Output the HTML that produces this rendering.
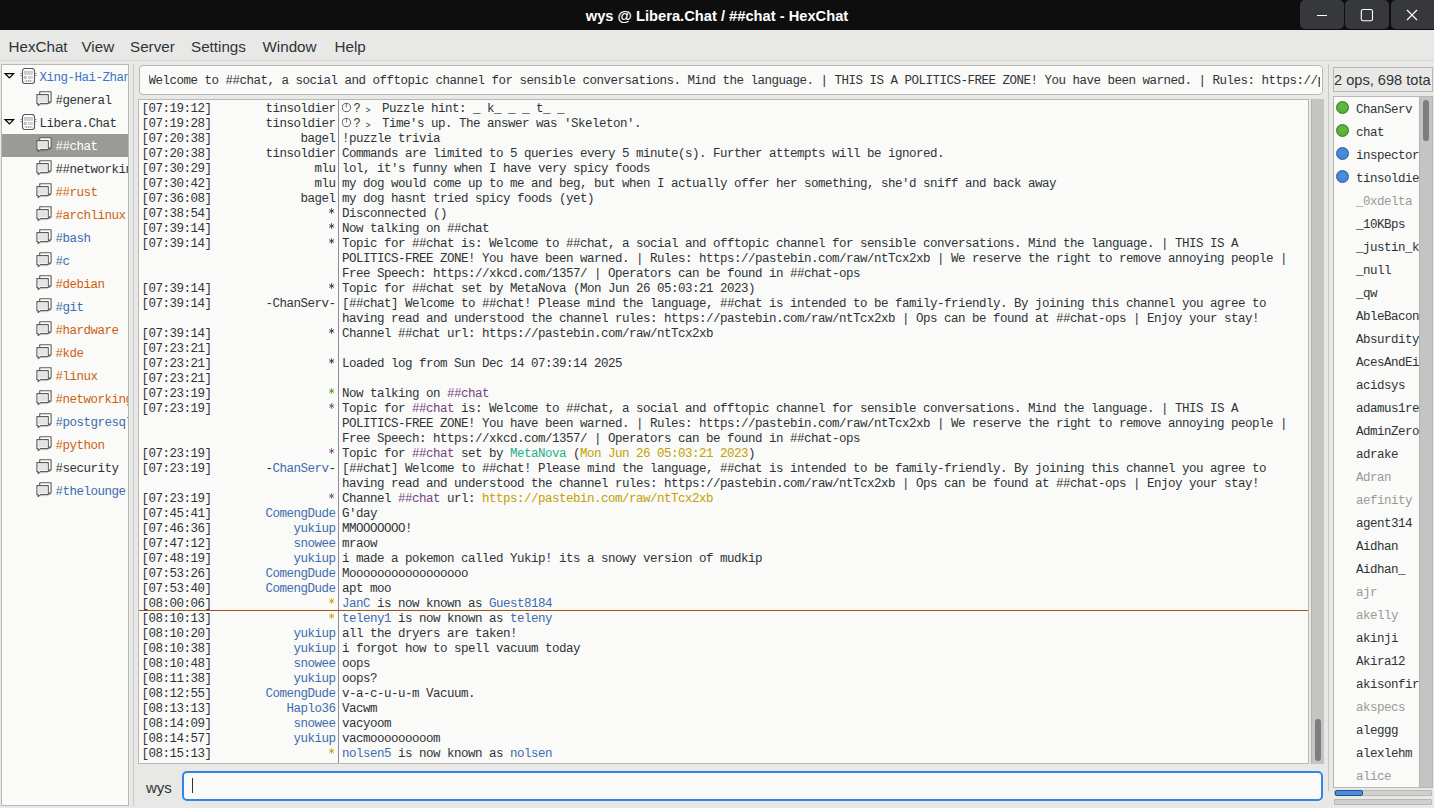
<!DOCTYPE html><html><head><meta charset="utf-8"><style>
*{margin:0;padding:0;box-sizing:border-box}
html,body{width:1434px;height:808px;overflow:hidden;background:#e8e8e7;position:relative;font-family:"Liberation Sans", sans-serif}
.abs{position:absolute}
#title{position:absolute;left:0;top:0;width:1434px;height:30px;background:#0e0e0e}
#ttext{position:absolute;left:0;top:1px;width:1434px;text-align:center;color:#fff;font:bold 14.7px "Liberation Sans", sans-serif;line-height:30px;white-space:pre}
.wb{position:absolute;top:0;width:44px;height:29px;background:#37383b;border-radius:5px}
#menu{position:absolute;left:0;top:30px;width:1434px;height:31px;background:#e8e8e7;border-bottom:1px solid #d6d5d2}
.mi{position:absolute;top:8px;font:15.2px "Liberation Sans", sans-serif;color:#2e3436;white-space:pre}
#tree{position:absolute;left:1px;top:64px;width:128px;height:742px;background:#fafaf9;border:1px solid #bab8b4;overflow:hidden}
.trow{position:absolute;left:0;width:126px;height:23px}
.trow.sel{background:#9b9a95}
.tl{position:absolute;top:6px;font-family:"Liberation Mono", monospace;font-size:12.5px;letter-spacing:-0.5012px;white-space:pre;line-height:15px}
.vsep{position:absolute;width:1px;background:#c9c7c3}
#topic{position:absolute;left:139px;top:65px;width:1184px;height:30px;background:#fafaf9;border:1px solid #bab8b4;border-radius:4px;overflow:hidden}
#topic span{position:absolute;left:8.5px;top:8px;width:1171px;overflow:hidden;font-family:"Liberation Mono", monospace;font-size:12.5px;letter-spacing:-0.5012px;white-space:pre;line-height:15px;color:#2e3436}
#chat{position:absolute;left:138px;top:99px;width:1171px;height:665px;background:#fafaf9;border:1px solid #bab8b4;overflow:hidden}
#csep{position:absolute;left:199px;top:0;width:1px;height:665px;background:#8f8b9e}
#marker{position:absolute;left:0;top:510px;width:1170px;height:1px;background:#a5521a}
.r{position:absolute;left:0;height:15px;width:1170px;font-family:"Liberation Mono", monospace;font-size:12.5px;letter-spacing:-0.5012px;white-space:pre;line-height:15px;color:#2e3436}
.ts{position:absolute;left:2.5px;top:0}
.nk{position:absolute;right:973.5px;top:0}
.tx{position:absolute;left:203px;top:0}
#sb{position:absolute;left:1311px;top:99px;width:13px;height:665px;background:#c4c5c3;border-left:1px solid #b3b3b0}
#slider{position:absolute;left:1315px;top:719px;width:6px;height:42px;background:#7c7e7e;border-radius:3px}
#wys{position:absolute;left:146px;top:779px;font:15px "Liberation Sans", sans-serif;color:#2e3436;white-space:pre}
#input{position:absolute;left:182px;top:771px;width:1141px;height:30px;background:#fafaf9;border:2px solid #3584e4;border-radius:5px}
#caret{position:absolute;left:192px;top:778px;width:1px;height:15px;background:#2e3436}
#ops{position:absolute;left:1333px;top:67px;width:100px;height:25px;background:#e8e8e7;border:1px solid #bab8b4;overflow:hidden}
#ops span{position:absolute;left:0px;top:4px;line-height:normal;font:14.6px "Liberation Sans", sans-serif;color:#2e3436;white-space:pre}
#ulist{position:absolute;left:1333px;top:96px;width:100px;height:692px;background:#fafaf9;border:1px solid #bab8b4;overflow:hidden}
.urow{position:absolute;left:0;width:86px;height:23px}
.dot{position:absolute;left:2.3px;top:4px;width:13px;height:13px;border-radius:50%;border:1px solid}
.ul{position:absolute;left:22px;top:6px;font-family:"Liberation Mono", monospace;font-size:12.5px;letter-spacing:-0.5012px;white-space:pre;line-height:15px}
#usb{position:absolute;left:1419px;top:97px;width:13px;height:690px;background:#c4c5c3;border-left:1px solid #b3b3b0}
#uslider{position:absolute;left:1423px;top:100px;width:6px;height:41px;background:#7c7e7e;border-radius:3px}
.pb{position:absolute;left:1334px;width:98px;height:6px;background:#d0d0ce;border:1px solid #b9b8b5;border-radius:1px}
</style></head><body><div id="title"><div id="ttext">wys @ Libera.Chat / ##chat - HexChat</div><div class="wb" style="left:1300px"><svg width="44" height="29"><rect x="17" y="15" width="10" height="1" fill="#fff"/></svg></div><div class="wb" style="left:1345px"><svg width="44" height="29"><rect x="16.3" y="9.5" width="11.2" height="11.2" rx="1.8" fill="none" stroke="#fff" stroke-width="1.1"/></svg></div><div class="wb" style="left:1391px;width:48px"><svg width="44" height="29"><path d="M16 10 L26 20 M26 10 L16 20" stroke="#fff" stroke-width="1.2"/></svg></div></div><div id="menu"><span class="mi" style="left:8.5px">HexChat</span><span class="mi" style="left:81.5px">View</span><span class="mi" style="left:130px">Server</span><span class="mi" style="left:191px">Settings</span><span class="mi" style="left:262.5px">Window</span><span class="mi" style="left:334.5px">Help</span></div><div id="tree"><div class="trow" style="top:0px"><svg width="12" height="8" viewBox="0 0 12 8" style="position:absolute;left:0.5px;top:7px"><path d="M2.2 1.6 L10.6 1.6 L6.4 5.9 Z" fill="none" stroke="#000" stroke-width="1.3" stroke-linejoin="miter"/></svg><svg width="18" height="18" viewBox="0 0 18 18" style="position:absolute;left:18px;top:3px"><rect x="2.5" y="0.5" width="12" height="15" rx="2.5" fill="#fff" stroke="#555" stroke-width="1.1"/><rect x="0.5" y="5" width="2" height="0.8" fill="#777"/><rect x="0.5" y="7" width="2" height="0.8" fill="#777"/><rect x="14.5" y="5" width="2" height="0.8" fill="#777"/><rect x="14.5" y="7" width="2" height="0.8" fill="#777"/><rect x="4.3" y="3.2" width="8.4" height="3.2" fill="#cfcfcf" stroke="#bbb" stroke-width="0.5"/><circle cx="5.3" cy="9.5" r="1.1" fill="none" stroke="#777" stroke-width="0.8"/><rect x="8.3" y="8.3" width="4.4" height="2.4" fill="#d5d5d5" stroke="#bbb" stroke-width="0.5"/><rect x="4.3" y="12.2" width="8.4" height="1.6" fill="#d8d8d8"/><rect x="6" y="12.2" width="0.8" height="1.6" fill="#999"/><rect x="8.1" y="12.2" width="0.8" height="1.6" fill="#999"/><rect x="10.2" y="12.2" width="0.8" height="1.6" fill="#999"/></svg><span class="tl" style="left:37.5px;color:#3b74c9">Xing-Hai-Zhang</span></div><div class="trow" style="top:23px"><svg width="18" height="18" viewBox="0 0 18 18" style="position:absolute;left:34px;top:1px"><path d="M3.7 2.7 H15.1 V12.8 H14.6 L13.8 14.2 L13.2 12.8 H3.7 Z" fill="#fff" stroke="#5c5c5a" stroke-width="1.1" stroke-linejoin="round"/><path d="M0.9 5.6 H12.3 V14.6 H4.6 L2.2 16.6 L2.1 14.6 H0.9 Z" fill="#fff" stroke="#5c5c5a" stroke-width="1.1" stroke-linejoin="round"/><rect x="2.1" y="6.8" width="9" height="6.6" fill="#e4e4e4"/><path d="M4 15.9 H11.5" stroke="#000" stroke-opacity="0.08" stroke-width="1"/></svg><span class="tl" style="left:53.6px;color:#2e3436">#general</span></div><div class="trow" style="top:46px"><svg width="12" height="8" viewBox="0 0 12 8" style="position:absolute;left:0.5px;top:7px"><path d="M2.2 1.6 L10.6 1.6 L6.4 5.9 Z" fill="none" stroke="#000" stroke-width="1.3" stroke-linejoin="miter"/></svg><svg width="18" height="18" viewBox="0 0 18 18" style="position:absolute;left:18px;top:3px"><rect x="2.5" y="0.5" width="12" height="15" rx="2.5" fill="#fff" stroke="#555" stroke-width="1.1"/><rect x="0.5" y="5" width="2" height="0.8" fill="#777"/><rect x="0.5" y="7" width="2" height="0.8" fill="#777"/><rect x="14.5" y="5" width="2" height="0.8" fill="#777"/><rect x="14.5" y="7" width="2" height="0.8" fill="#777"/><rect x="4.3" y="3.2" width="8.4" height="3.2" fill="#cfcfcf" stroke="#bbb" stroke-width="0.5"/><circle cx="5.3" cy="9.5" r="1.1" fill="none" stroke="#777" stroke-width="0.8"/><rect x="8.3" y="8.3" width="4.4" height="2.4" fill="#d5d5d5" stroke="#bbb" stroke-width="0.5"/><rect x="4.3" y="12.2" width="8.4" height="1.6" fill="#d8d8d8"/><rect x="6" y="12.2" width="0.8" height="1.6" fill="#999"/><rect x="8.1" y="12.2" width="0.8" height="1.6" fill="#999"/><rect x="10.2" y="12.2" width="0.8" height="1.6" fill="#999"/></svg><span class="tl" style="left:37.5px;color:#2e3436">Libera.Chat</span></div><div class="trow sel" style="top:69px"><svg width="18" height="18" viewBox="0 0 18 18" style="position:absolute;left:34px;top:1px"><path d="M3.7 2.7 H15.1 V12.8 H14.6 L13.8 14.2 L13.2 12.8 H3.7 Z" fill="#fff" stroke="#5c5c5a" stroke-width="1.1" stroke-linejoin="round"/><path d="M0.9 5.6 H12.3 V14.6 H4.6 L2.2 16.6 L2.1 14.6 H0.9 Z" fill="#fff" stroke="#5c5c5a" stroke-width="1.1" stroke-linejoin="round"/><rect x="2.1" y="6.8" width="9" height="6.6" fill="#e4e4e4"/><path d="M4 15.9 H11.5" stroke="#000" stroke-opacity="0.08" stroke-width="1"/></svg><span class="tl" style="left:53.6px;color:#ffffff">##chat</span></div><div class="trow" style="top:92px"><svg width="18" height="18" viewBox="0 0 18 18" style="position:absolute;left:34px;top:1px"><path d="M3.7 2.7 H15.1 V12.8 H14.6 L13.8 14.2 L13.2 12.8 H3.7 Z" fill="#fff" stroke="#5c5c5a" stroke-width="1.1" stroke-linejoin="round"/><path d="M0.9 5.6 H12.3 V14.6 H4.6 L2.2 16.6 L2.1 14.6 H0.9 Z" fill="#fff" stroke="#5c5c5a" stroke-width="1.1" stroke-linejoin="round"/><rect x="2.1" y="6.8" width="9" height="6.6" fill="#e4e4e4"/><path d="M4 15.9 H11.5" stroke="#000" stroke-opacity="0.08" stroke-width="1"/></svg><span class="tl" style="left:53.6px;color:#2e3436">##networking</span></div><div class="trow" style="top:115px"><svg width="18" height="18" viewBox="0 0 18 18" style="position:absolute;left:34px;top:1px"><path d="M3.7 2.7 H15.1 V12.8 H14.6 L13.8 14.2 L13.2 12.8 H3.7 Z" fill="#fff" stroke="#5c5c5a" stroke-width="1.1" stroke-linejoin="round"/><path d="M0.9 5.6 H12.3 V14.6 H4.6 L2.2 16.6 L2.1 14.6 H0.9 Z" fill="#fff" stroke="#5c5c5a" stroke-width="1.1" stroke-linejoin="round"/><rect x="2.1" y="6.8" width="9" height="6.6" fill="#e4e4e4"/><path d="M4 15.9 H11.5" stroke="#000" stroke-opacity="0.08" stroke-width="1"/></svg><span class="tl" style="left:53.6px;color:#cc6210">##rust</span></div><div class="trow" style="top:138px"><svg width="18" height="18" viewBox="0 0 18 18" style="position:absolute;left:34px;top:1px"><path d="M3.7 2.7 H15.1 V12.8 H14.6 L13.8 14.2 L13.2 12.8 H3.7 Z" fill="#fff" stroke="#5c5c5a" stroke-width="1.1" stroke-linejoin="round"/><path d="M0.9 5.6 H12.3 V14.6 H4.6 L2.2 16.6 L2.1 14.6 H0.9 Z" fill="#fff" stroke="#5c5c5a" stroke-width="1.1" stroke-linejoin="round"/><rect x="2.1" y="6.8" width="9" height="6.6" fill="#e4e4e4"/><path d="M4 15.9 H11.5" stroke="#000" stroke-opacity="0.08" stroke-width="1"/></svg><span class="tl" style="left:53.6px;color:#cc6210">#archlinux</span></div><div class="trow" style="top:161px"><svg width="18" height="18" viewBox="0 0 18 18" style="position:absolute;left:34px;top:1px"><path d="M3.7 2.7 H15.1 V12.8 H14.6 L13.8 14.2 L13.2 12.8 H3.7 Z" fill="#fff" stroke="#5c5c5a" stroke-width="1.1" stroke-linejoin="round"/><path d="M0.9 5.6 H12.3 V14.6 H4.6 L2.2 16.6 L2.1 14.6 H0.9 Z" fill="#fff" stroke="#5c5c5a" stroke-width="1.1" stroke-linejoin="round"/><rect x="2.1" y="6.8" width="9" height="6.6" fill="#e4e4e4"/><path d="M4 15.9 H11.5" stroke="#000" stroke-opacity="0.08" stroke-width="1"/></svg><span class="tl" style="left:53.6px;color:#3f6cad">#bash</span></div><div class="trow" style="top:184px"><svg width="18" height="18" viewBox="0 0 18 18" style="position:absolute;left:34px;top:1px"><path d="M3.7 2.7 H15.1 V12.8 H14.6 L13.8 14.2 L13.2 12.8 H3.7 Z" fill="#fff" stroke="#5c5c5a" stroke-width="1.1" stroke-linejoin="round"/><path d="M0.9 5.6 H12.3 V14.6 H4.6 L2.2 16.6 L2.1 14.6 H0.9 Z" fill="#fff" stroke="#5c5c5a" stroke-width="1.1" stroke-linejoin="round"/><rect x="2.1" y="6.8" width="9" height="6.6" fill="#e4e4e4"/><path d="M4 15.9 H11.5" stroke="#000" stroke-opacity="0.08" stroke-width="1"/></svg><span class="tl" style="left:53.6px;color:#3f6cad">#c</span></div><div class="trow" style="top:207px"><svg width="18" height="18" viewBox="0 0 18 18" style="position:absolute;left:34px;top:1px"><path d="M3.7 2.7 H15.1 V12.8 H14.6 L13.8 14.2 L13.2 12.8 H3.7 Z" fill="#fff" stroke="#5c5c5a" stroke-width="1.1" stroke-linejoin="round"/><path d="M0.9 5.6 H12.3 V14.6 H4.6 L2.2 16.6 L2.1 14.6 H0.9 Z" fill="#fff" stroke="#5c5c5a" stroke-width="1.1" stroke-linejoin="round"/><rect x="2.1" y="6.8" width="9" height="6.6" fill="#e4e4e4"/><path d="M4 15.9 H11.5" stroke="#000" stroke-opacity="0.08" stroke-width="1"/></svg><span class="tl" style="left:53.6px;color:#cc6210">#debian</span></div><div class="trow" style="top:230px"><svg width="18" height="18" viewBox="0 0 18 18" style="position:absolute;left:34px;top:1px"><path d="M3.7 2.7 H15.1 V12.8 H14.6 L13.8 14.2 L13.2 12.8 H3.7 Z" fill="#fff" stroke="#5c5c5a" stroke-width="1.1" stroke-linejoin="round"/><path d="M0.9 5.6 H12.3 V14.6 H4.6 L2.2 16.6 L2.1 14.6 H0.9 Z" fill="#fff" stroke="#5c5c5a" stroke-width="1.1" stroke-linejoin="round"/><rect x="2.1" y="6.8" width="9" height="6.6" fill="#e4e4e4"/><path d="M4 15.9 H11.5" stroke="#000" stroke-opacity="0.08" stroke-width="1"/></svg><span class="tl" style="left:53.6px;color:#3f6cad">#git</span></div><div class="trow" style="top:253px"><svg width="18" height="18" viewBox="0 0 18 18" style="position:absolute;left:34px;top:1px"><path d="M3.7 2.7 H15.1 V12.8 H14.6 L13.8 14.2 L13.2 12.8 H3.7 Z" fill="#fff" stroke="#5c5c5a" stroke-width="1.1" stroke-linejoin="round"/><path d="M0.9 5.6 H12.3 V14.6 H4.6 L2.2 16.6 L2.1 14.6 H0.9 Z" fill="#fff" stroke="#5c5c5a" stroke-width="1.1" stroke-linejoin="round"/><rect x="2.1" y="6.8" width="9" height="6.6" fill="#e4e4e4"/><path d="M4 15.9 H11.5" stroke="#000" stroke-opacity="0.08" stroke-width="1"/></svg><span class="tl" style="left:53.6px;color:#cc6210">#hardware</span></div><div class="trow" style="top:276px"><svg width="18" height="18" viewBox="0 0 18 18" style="position:absolute;left:34px;top:1px"><path d="M3.7 2.7 H15.1 V12.8 H14.6 L13.8 14.2 L13.2 12.8 H3.7 Z" fill="#fff" stroke="#5c5c5a" stroke-width="1.1" stroke-linejoin="round"/><path d="M0.9 5.6 H12.3 V14.6 H4.6 L2.2 16.6 L2.1 14.6 H0.9 Z" fill="#fff" stroke="#5c5c5a" stroke-width="1.1" stroke-linejoin="round"/><rect x="2.1" y="6.8" width="9" height="6.6" fill="#e4e4e4"/><path d="M4 15.9 H11.5" stroke="#000" stroke-opacity="0.08" stroke-width="1"/></svg><span class="tl" style="left:53.6px;color:#cc6210">#kde</span></div><div class="trow" style="top:299px"><svg width="18" height="18" viewBox="0 0 18 18" style="position:absolute;left:34px;top:1px"><path d="M3.7 2.7 H15.1 V12.8 H14.6 L13.8 14.2 L13.2 12.8 H3.7 Z" fill="#fff" stroke="#5c5c5a" stroke-width="1.1" stroke-linejoin="round"/><path d="M0.9 5.6 H12.3 V14.6 H4.6 L2.2 16.6 L2.1 14.6 H0.9 Z" fill="#fff" stroke="#5c5c5a" stroke-width="1.1" stroke-linejoin="round"/><rect x="2.1" y="6.8" width="9" height="6.6" fill="#e4e4e4"/><path d="M4 15.9 H11.5" stroke="#000" stroke-opacity="0.08" stroke-width="1"/></svg><span class="tl" style="left:53.6px;color:#cc6210">#linux</span></div><div class="trow" style="top:322px"><svg width="18" height="18" viewBox="0 0 18 18" style="position:absolute;left:34px;top:1px"><path d="M3.7 2.7 H15.1 V12.8 H14.6 L13.8 14.2 L13.2 12.8 H3.7 Z" fill="#fff" stroke="#5c5c5a" stroke-width="1.1" stroke-linejoin="round"/><path d="M0.9 5.6 H12.3 V14.6 H4.6 L2.2 16.6 L2.1 14.6 H0.9 Z" fill="#fff" stroke="#5c5c5a" stroke-width="1.1" stroke-linejoin="round"/><rect x="2.1" y="6.8" width="9" height="6.6" fill="#e4e4e4"/><path d="M4 15.9 H11.5" stroke="#000" stroke-opacity="0.08" stroke-width="1"/></svg><span class="tl" style="left:53.6px;color:#cc6210">#networking</span></div><div class="trow" style="top:345px"><svg width="18" height="18" viewBox="0 0 18 18" style="position:absolute;left:34px;top:1px"><path d="M3.7 2.7 H15.1 V12.8 H14.6 L13.8 14.2 L13.2 12.8 H3.7 Z" fill="#fff" stroke="#5c5c5a" stroke-width="1.1" stroke-linejoin="round"/><path d="M0.9 5.6 H12.3 V14.6 H4.6 L2.2 16.6 L2.1 14.6 H0.9 Z" fill="#fff" stroke="#5c5c5a" stroke-width="1.1" stroke-linejoin="round"/><rect x="2.1" y="6.8" width="9" height="6.6" fill="#e4e4e4"/><path d="M4 15.9 H11.5" stroke="#000" stroke-opacity="0.08" stroke-width="1"/></svg><span class="tl" style="left:53.6px;color:#3f6cad">#postgresql</span></div><div class="trow" style="top:368px"><svg width="18" height="18" viewBox="0 0 18 18" style="position:absolute;left:34px;top:1px"><path d="M3.7 2.7 H15.1 V12.8 H14.6 L13.8 14.2 L13.2 12.8 H3.7 Z" fill="#fff" stroke="#5c5c5a" stroke-width="1.1" stroke-linejoin="round"/><path d="M0.9 5.6 H12.3 V14.6 H4.6 L2.2 16.6 L2.1 14.6 H0.9 Z" fill="#fff" stroke="#5c5c5a" stroke-width="1.1" stroke-linejoin="round"/><rect x="2.1" y="6.8" width="9" height="6.6" fill="#e4e4e4"/><path d="M4 15.9 H11.5" stroke="#000" stroke-opacity="0.08" stroke-width="1"/></svg><span class="tl" style="left:53.6px;color:#cc6210">#python</span></div><div class="trow" style="top:391px"><svg width="18" height="18" viewBox="0 0 18 18" style="position:absolute;left:34px;top:1px"><path d="M3.7 2.7 H15.1 V12.8 H14.6 L13.8 14.2 L13.2 12.8 H3.7 Z" fill="#fff" stroke="#5c5c5a" stroke-width="1.1" stroke-linejoin="round"/><path d="M0.9 5.6 H12.3 V14.6 H4.6 L2.2 16.6 L2.1 14.6 H0.9 Z" fill="#fff" stroke="#5c5c5a" stroke-width="1.1" stroke-linejoin="round"/><rect x="2.1" y="6.8" width="9" height="6.6" fill="#e4e4e4"/><path d="M4 15.9 H11.5" stroke="#000" stroke-opacity="0.08" stroke-width="1"/></svg><span class="tl" style="left:53.6px;color:#2e3436">#security</span></div><div class="trow" style="top:414px"><svg width="18" height="18" viewBox="0 0 18 18" style="position:absolute;left:34px;top:1px"><path d="M3.7 2.7 H15.1 V12.8 H14.6 L13.8 14.2 L13.2 12.8 H3.7 Z" fill="#fff" stroke="#5c5c5a" stroke-width="1.1" stroke-linejoin="round"/><path d="M0.9 5.6 H12.3 V14.6 H4.6 L2.2 16.6 L2.1 14.6 H0.9 Z" fill="#fff" stroke="#5c5c5a" stroke-width="1.1" stroke-linejoin="round"/><rect x="2.1" y="6.8" width="9" height="6.6" fill="#e4e4e4"/><path d="M4 15.9 H11.5" stroke="#000" stroke-opacity="0.08" stroke-width="1"/></svg><span class="tl" style="left:53.6px;color:#3f6cad">#thelounge</span></div></div><div class="vsep" style="left:133px;top:64px;height:742px"></div><div id="topic"><span>Welcome to ##chat, a social and offtopic channel for sensible conversations. Mind the language. | THIS IS A POLITICS-FREE ZONE! You have been warned. | Rules: https://pastebin.com/raw/ntTcx2xb | We reserve</span></div><div id="chat"><div id="csep"></div><div id="marker"></div><div class="r" style="top:2px"><span class="ts">[07:19:12]</span><span class="nk">tinsoldier</span><span class="tx"><svg width="12" height="15" style="position:absolute;left:0;top:0"><circle cx="4.4" cy="5.5" r="4.1" fill="none" stroke="#4a4c4e" stroke-width="0.9"/><path d="M4.4 1.2 V5.6" stroke="#6a6c70" stroke-width="0.9"/></svg><span style="position:absolute;left:11.4px;top:-0.5px;font-size:12px;letter-spacing:0">?</span><span style="position:absolute;left:23.6px;top:2px;font-size:8.5px;letter-spacing:0">&gt;</span><span style="display:inline-block;width:40px"></span>Puzzle hint: _ k_ _ _ t_ _</span></div><div class="r" style="top:17px"><span class="ts">[07:19:28]</span><span class="nk">tinsoldier</span><span class="tx"><svg width="12" height="15" style="position:absolute;left:0;top:0"><circle cx="4.4" cy="5.5" r="4.1" fill="none" stroke="#4a4c4e" stroke-width="0.9"/><path d="M4.4 1.2 V5.6" stroke="#6a6c70" stroke-width="0.9"/></svg><span style="position:absolute;left:11.4px;top:-0.5px;font-size:12px;letter-spacing:0">?</span><span style="position:absolute;left:23.6px;top:2px;font-size:8.5px;letter-spacing:0">&gt;</span><span style="display:inline-block;width:40px"></span>Time&#x27;s up. The answer was &#x27;Skeleton&#x27;.</span></div><div class="r" style="top:32px"><span class="ts">[07:20:38]</span><span class="nk">bagel</span><span class="tx">!puzzle trivia</span></div><div class="r" style="top:47px"><span class="ts">[07:20:38]</span><span class="nk">tinsoldier</span><span class="tx">Commands are limited to 5 queries every 5 minute(s). Further attempts will be ignored.</span></div><div class="r" style="top:62px"><span class="ts">[07:30:29]</span><span class="nk">mlu</span><span class="tx">lol, it&#x27;s funny when I have very spicy foods</span></div><div class="r" style="top:77px"><span class="ts">[07:30:42]</span><span class="nk">mlu</span><span class="tx">my dog would come up to me and beg, but when I actually offer her something, she&#x27;d sniff and back away</span></div><div class="r" style="top:92px"><span class="ts">[07:36:08]</span><span class="nk">bagel</span><span class="tx">my dog hasnt tried spicy foods (yet)</span></div><div class="r" style="top:107px"><span class="ts">[07:38:54]</span><span class="nk"><svg width="7" height="15" style="vertical-align:top"><g stroke="#2e3436" stroke-width="0.85"><path d="M2.6 1.1 V6.9"/><path d="M0.1 2.55 L5.1 5.45"/><path d="M5.1 2.55 L0.1 5.45"/></g></svg></span><span class="tx">Disconnected ()</span></div><div class="r" style="top:122px"><span class="ts">[07:39:14]</span><span class="nk"><svg width="7" height="15" style="vertical-align:top"><g stroke="#2e3436" stroke-width="0.85"><path d="M2.6 1.1 V6.9"/><path d="M0.1 2.55 L5.1 5.45"/><path d="M5.1 2.55 L0.1 5.45"/></g></svg></span><span class="tx">Now talking on ##chat</span></div><div class="r" style="top:137px"><span class="ts">[07:39:14]</span><span class="nk"><svg width="7" height="15" style="vertical-align:top"><g stroke="#2e3436" stroke-width="0.85"><path d="M2.6 1.1 V6.9"/><path d="M0.1 2.55 L5.1 5.45"/><path d="M5.1 2.55 L0.1 5.45"/></g></svg></span><span class="tx">Topic for ##chat is: Welcome to ##chat, a social and offtopic channel for sensible conversations. Mind the language. | THIS IS A</span></div><div class="r" style="top:152px"><span class="ts"></span><span class="nk"></span><span class="tx">POLITICS-FREE ZONE! You have been warned. | Rules: https://pastebin.com/raw/ntTcx2xb | We reserve the right to remove annoying people |</span></div><div class="r" style="top:167px"><span class="ts"></span><span class="nk"></span><span class="tx">Free Speech: https://xkcd.com/1357/ | Operators can be found in ##chat-ops</span></div><div class="r" style="top:182px"><span class="ts">[07:39:14]</span><span class="nk"><svg width="7" height="15" style="vertical-align:top"><g stroke="#2e3436" stroke-width="0.85"><path d="M2.6 1.1 V6.9"/><path d="M0.1 2.55 L5.1 5.45"/><path d="M5.1 2.55 L0.1 5.45"/></g></svg></span><span class="tx">Topic for ##chat set by MetaNova (Mon Jun 26 05:03:21 2023)</span></div><div class="r" style="top:197px"><span class="ts">[07:39:14]</span><span class="nk">-ChanServ-</span><span class="tx">[##chat] Welcome to ##chat! Please mind the language, ##chat is intended to be family-friendly. By joining this channel you agree to</span></div><div class="r" style="top:212px"><span class="ts"></span><span class="nk"></span><span class="tx">having read and understood the channel rules: https://pastebin.com/raw/ntTcx2xb | Ops can be found at ##chat-ops | Enjoy your stay!</span></div><div class="r" style="top:227px"><span class="ts">[07:39:14]</span><span class="nk"><svg width="7" height="15" style="vertical-align:top"><g stroke="#2e3436" stroke-width="0.85"><path d="M2.6 1.1 V6.9"/><path d="M0.1 2.55 L5.1 5.45"/><path d="M5.1 2.55 L0.1 5.45"/></g></svg></span><span class="tx">Channel ##chat url: https://pastebin.com/raw/ntTcx2xb</span></div><div class="r" style="top:242px"><span class="ts">[07:23:21]</span><span class="nk"></span><span class="tx"></span></div><div class="r" style="top:257px"><span class="ts">[07:23:21]</span><span class="nk"><svg width="7" height="15" style="vertical-align:top"><g stroke="#2e3436" stroke-width="0.85"><path d="M2.6 1.1 V6.9"/><path d="M0.1 2.55 L5.1 5.45"/><path d="M5.1 2.55 L0.1 5.45"/></g></svg></span><span class="tx">Loaded log from Sun Dec 14 07:39:14 2025</span></div><div class="r" style="top:272px"><span class="ts">[07:23:21]</span><span class="nk"></span><span class="tx"></span></div><div class="r" style="top:287px"><span class="ts">[07:23:19]</span><span class="nk"><svg width="7" height="15" style="vertical-align:top"><g stroke="#4e9a06" stroke-width="0.85"><path d="M2.6 1.1 V6.9"/><path d="M0.1 2.55 L5.1 5.45"/><path d="M5.1 2.55 L0.1 5.45"/></g></svg></span><span class="tx">Now talking on <span style="color:#74437f">##chat</span></span></div><div class="r" style="top:302px"><span class="ts">[07:23:19]</span><span class="nk"><svg width="7" height="15" style="vertical-align:top"><g stroke="#74437f" stroke-width="0.85"><path d="M2.6 1.1 V6.9"/><path d="M0.1 2.55 L5.1 5.45"/><path d="M5.1 2.55 L0.1 5.45"/></g></svg></span><span class="tx">Topic for <span style="color:#74437f">##chat</span> is: Welcome to ##chat, a social and offtopic channel for sensible conversations. Mind the language. | THIS IS A</span></div><div class="r" style="top:317px"><span class="ts"></span><span class="nk"></span><span class="tx">POLITICS-FREE ZONE! You have been warned. | Rules: https://pastebin.com/raw/ntTcx2xb | We reserve the right to remove annoying people |</span></div><div class="r" style="top:332px"><span class="ts"></span><span class="nk"></span><span class="tx">Free Speech: https://xkcd.com/1357/ | Operators can be found in ##chat-ops</span></div><div class="r" style="top:347px"><span class="ts">[07:23:19]</span><span class="nk"><svg width="7" height="15" style="vertical-align:top"><g stroke="#74437f" stroke-width="0.85"><path d="M2.6 1.1 V6.9"/><path d="M0.1 2.55 L5.1 5.45"/><path d="M5.1 2.55 L0.1 5.45"/></g></svg></span><span class="tx">Topic for <span style="color:#74437f">##chat</span> set by <span style="color:#26b08a">MetaNova</span> (<span style="color:#c4a000">Mon Jun 26 05:03:21 2023</span>)</span></div><div class="r" style="top:362px"><span class="ts">[07:23:19]</span><span class="nk">-<span style="color:#3f6cad">ChanServ</span>-</span><span class="tx">[##chat] Welcome to ##chat! Please mind the language, ##chat is intended to be family-friendly. By joining this channel you agree to</span></div><div class="r" style="top:377px"><span class="ts"></span><span class="nk"></span><span class="tx">having read and understood the channel rules: https://pastebin.com/raw/ntTcx2xb | Ops can be found at ##chat-ops | Enjoy your stay!</span></div><div class="r" style="top:392px"><span class="ts">[07:23:19]</span><span class="nk"><svg width="7" height="15" style="vertical-align:top"><g stroke="#74437f" stroke-width="0.85"><path d="M2.6 1.1 V6.9"/><path d="M0.1 2.55 L5.1 5.45"/><path d="M5.1 2.55 L0.1 5.45"/></g></svg></span><span class="tx">Channel <span style="color:#74437f">##chat</span> url: <span style="color:#c4a000">https://pastebin.com/raw/ntTcx2xb</span></span></div><div class="r" style="top:407px"><span class="ts">[07:45:41]</span><span class="nk"><span style="color:#3f6cad">ComengDude</span></span><span class="tx">G&#x27;day</span></div><div class="r" style="top:422px"><span class="ts">[07:46:36]</span><span class="nk"><span style="color:#3f6cad">yukiup</span></span><span class="tx">MMOOOOOOO!</span></div><div class="r" style="top:437px"><span class="ts">[07:47:12]</span><span class="nk"><span style="color:#3f6cad">snowee</span></span><span class="tx">mraow</span></div><div class="r" style="top:452px"><span class="ts">[07:48:19]</span><span class="nk"><span style="color:#3f6cad">yukiup</span></span><span class="tx">i made a pokemon called Yukip! its a snowy version of mudkip</span></div><div class="r" style="top:467px"><span class="ts">[07:53:26]</span><span class="nk"><span style="color:#3f6cad">ComengDude</span></span><span class="tx">Mooooooooooooooooo</span></div><div class="r" style="top:482px"><span class="ts">[07:53:40]</span><span class="nk"><span style="color:#3f6cad">ComengDude</span></span><span class="tx">apt moo</span></div><div class="r" style="top:497px"><span class="ts">[08:00:06]</span><span class="nk"><svg width="7" height="15" style="vertical-align:top"><g stroke="#c4a000" stroke-width="0.85"><path d="M2.6 1.1 V6.9"/><path d="M0.1 2.55 L5.1 5.45"/><path d="M5.1 2.55 L0.1 5.45"/></g></svg></span><span class="tx"><span style="color:#3f6cad">JanC</span> is now known as <span style="color:#3f6cad">Guest8184</span></span></div><div class="r" style="top:512px"><span class="ts">[08:10:13]</span><span class="nk"><svg width="7" height="15" style="vertical-align:top"><g stroke="#c4a000" stroke-width="0.85"><path d="M2.6 1.1 V6.9"/><path d="M0.1 2.55 L5.1 5.45"/><path d="M5.1 2.55 L0.1 5.45"/></g></svg></span><span class="tx"><span style="color:#3f6cad">teleny1</span> is now known as <span style="color:#3f6cad">teleny</span></span></div><div class="r" style="top:527px"><span class="ts">[08:10:20]</span><span class="nk"><span style="color:#3f6cad">yukiup</span></span><span class="tx">all the dryers are taken!</span></div><div class="r" style="top:542px"><span class="ts">[08:10:38]</span><span class="nk"><span style="color:#3f6cad">yukiup</span></span><span class="tx">i forgot how to spell vacuum today</span></div><div class="r" style="top:557px"><span class="ts">[08:10:48]</span><span class="nk"><span style="color:#3f6cad">snowee</span></span><span class="tx">oops</span></div><div class="r" style="top:572px"><span class="ts">[08:11:38]</span><span class="nk"><span style="color:#3f6cad">yukiup</span></span><span class="tx">oops?</span></div><div class="r" style="top:587px"><span class="ts">[08:12:55]</span><span class="nk"><span style="color:#3f6cad">ComengDude</span></span><span class="tx">v-a-c-u-u-m Vacuum.</span></div><div class="r" style="top:602px"><span class="ts">[08:13:13]</span><span class="nk"><span style="color:#3f6cad">Haplo36</span></span><span class="tx">Vacwm</span></div><div class="r" style="top:617px"><span class="ts">[08:14:09]</span><span class="nk"><span style="color:#3f6cad">snowee</span></span><span class="tx">vacyoom</span></div><div class="r" style="top:632px"><span class="ts">[08:14:57]</span><span class="nk"><span style="color:#3f6cad">yukiup</span></span><span class="tx">vacmooooooooom</span></div><div class="r" style="top:647px"><span class="ts">[08:15:13]</span><span class="nk"><svg width="7" height="15" style="vertical-align:top"><g stroke="#c4a000" stroke-width="0.85"><path d="M2.6 1.1 V6.9"/><path d="M0.1 2.55 L5.1 5.45"/><path d="M5.1 2.55 L0.1 5.45"/></g></svg></span><span class="tx"><span style="color:#3f6cad">nolsen5</span> is now known as <span style="color:#3f6cad">nolsen</span></span></div></div><div id="sb"></div><div id="slider"></div><div id="wys">wys</div><div id="input"></div><div id="caret"></div><div class="vsep" style="left:1328px;top:64px;height:727px"></div><div id="ops"><span>2 ops, 698 tota</span></div><div id="ulist"><div class="urow" style="top:0px"><span class="dot" style="background:radial-gradient(circle at 50% 45%,#62bd3d,#52a633);border-color:#3a7526"></span><span class="ul" style="color:#2e3436">ChanServ</span></div><div class="urow" style="top:23px"><span class="dot" style="background:radial-gradient(circle at 50% 45%,#62bd3d,#52a633);border-color:#3a7526"></span><span class="ul" style="color:#2e3436">chat</span></div><div class="urow" style="top:46px"><span class="dot" style="background:radial-gradient(circle at 50% 45%,#4d90e0,#3f80d0);border-color:#2c5a98"></span><span class="ul" style="color:#2e3436">inspector</span></div><div class="urow" style="top:69px"><span class="dot" style="background:radial-gradient(circle at 50% 45%,#4d90e0,#3f80d0);border-color:#2c5a98"></span><span class="ul" style="color:#2e3436">tinsoldier</span></div><div class="urow" style="top:92px"><span class="ul" style="color:#9a9996">_0xdelta</span></div><div class="urow" style="top:115px"><span class="ul" style="color:#2e3436">_10KBps</span></div><div class="urow" style="top:138px"><span class="ul" style="color:#2e3436">_justin_k</span></div><div class="urow" style="top:161px"><span class="ul" style="color:#2e3436">_null</span></div><div class="urow" style="top:184px"><span class="ul" style="color:#2e3436">_qw</span></div><div class="urow" style="top:207px"><span class="ul" style="color:#2e3436">AbleBacon</span></div><div class="urow" style="top:230px"><span class="ul" style="color:#2e3436">Absurdity</span></div><div class="urow" style="top:253px"><span class="ul" style="color:#2e3436">AcesAndEi</span></div><div class="urow" style="top:276px"><span class="ul" style="color:#2e3436">acidsys</span></div><div class="urow" style="top:299px"><span class="ul" style="color:#2e3436">adamus1re</span></div><div class="urow" style="top:322px"><span class="ul" style="color:#2e3436">AdminZero</span></div><div class="urow" style="top:345px"><span class="ul" style="color:#2e3436">adrake</span></div><div class="urow" style="top:368px"><span class="ul" style="color:#9a9996">Adran</span></div><div class="urow" style="top:391px"><span class="ul" style="color:#9a9996">aefinity</span></div><div class="urow" style="top:414px"><span class="ul" style="color:#2e3436">agent314</span></div><div class="urow" style="top:437px"><span class="ul" style="color:#2e3436">Aidhan</span></div><div class="urow" style="top:460px"><span class="ul" style="color:#2e3436">Aidhan_</span></div><div class="urow" style="top:483px"><span class="ul" style="color:#9a9996">ajr</span></div><div class="urow" style="top:506px"><span class="ul" style="color:#9a9996">akelly</span></div><div class="urow" style="top:529px"><span class="ul" style="color:#2e3436">akinji</span></div><div class="urow" style="top:552px"><span class="ul" style="color:#2e3436">Akira12</span></div><div class="urow" style="top:575px"><span class="ul" style="color:#2e3436">akisonfire</span></div><div class="urow" style="top:598px"><span class="ul" style="color:#9a9996">akspecs</span></div><div class="urow" style="top:621px"><span class="ul" style="color:#2e3436">aleggg</span></div><div class="urow" style="top:644px"><span class="ul" style="color:#2e3436">alexlehm</span></div><div class="urow" style="top:667px"><span class="ul" style="color:#9a9996">alice</span></div></div><div id="usb"></div><div id="uslider"></div><div class="pb" style="top:790px"><div style="position:absolute;left:0;top:-1px;width:28px;height:6px;background:#4a90d9;border:1px solid #1c4f8f;border-radius:2px"></div></div><div class="pb" style="top:799px"></div></body></html>
